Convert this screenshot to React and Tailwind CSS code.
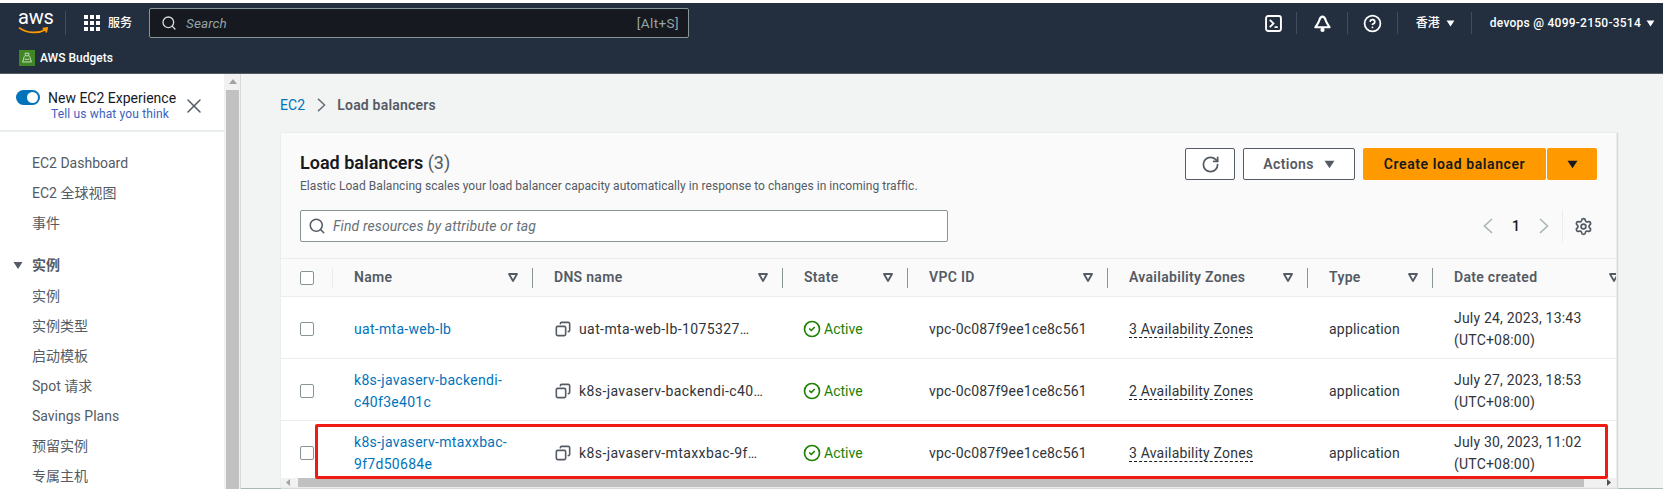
import React from "react";
import { Search, X, RotateCw, Settings, Copy, CircleCheck, CircleHelp } from "lucide-react";

const Caret = ({ className }) => (
  <svg viewBox="0 0 10 8" className={className}><path d="M0.5 0.5h9L5 7.5z" fill="currentColor" /></svg>
);
const Chevron = ({ className, left }) => (
  <svg viewBox="0 0 10 16" className={className}><path d={left ? "M9 1L1.5 8 9 15" : "M1 1l7.5 7L1 15"} fill="none" stroke="currentColor" strokeWidth="1.7" /></svg>
);
const FilterIcon = () => (
  <svg viewBox="0 0 10 9" className="w-[10px] h-[9px] text-[#545b64] shrink-0"><path d="M1 1h8L5 8z" fill="none" stroke="currentColor" strokeWidth="1.8" strokeLinejoin="round" /></svg>
);
const Checkbox = () => <div className="w-[14px] h-[14px] rounded-[2px] border border-[#879596] bg-white shrink-0" />;

const cols = "grid grid-cols-[52px_200px_250px_125px_200px_200px_125px_200px]";

const headers = ["Name", "DNS name", "State", "VPC ID", "Availability Zones", "Type", "Date created"];
const rows = [
  { name: ["uat-mta-web-lb"], dns: "uat-mta-web-lb-1075327…", az: "3 Availability Zones", d: "July 24, 2023, 13:43" },
  { name: ["k8s-javaserv-backendi-", "c40f3e401c"], dns: "k8s-javaserv-backendi-c40…", az: "2 Availability Zones", d: "July 27, 2023, 18:53" },
  { name: ["k8s-javaserv-mtaxxbac-", "9f7d50684e"], dns: "k8s-javaserv-mtaxxbac-9f…", az: "3 Availability Zones", d: "July 30, 2023, 11:02" },
];
const navItems = ["EC2 Dashboard", "EC2 全球视图", "事件"];
const navItems2 = ["实例", "实例类型", "启动模板", "Spot 请求", "Savings Plans", "预留实例", "专属主机"];

function TopNav() {
  return (
    <header className="h-[71px] shrink-0 bg-[#232f3e] border-b border-[#545b64] text-white flex flex-col">
      <div className="h-[40px] flex items-center">
        <div className="w-[66px] h-[24px] shrink-0 pl-[18px] border-r border-[#414d5c]">
          <div className="text-[20px] leading-[15px] tracking-[-0.2px] -mt-[1px]">aws</div>
          <svg viewBox="0 0 32 9" className="w-[31px] h-[9px] mt-[1px] text-[#ff9900]"><path d="M1 1.5C9 7.5 21 8 29 3.5M25.5 2.5l4.5-.5-1 4.5" fill="none" stroke="currentColor" strokeWidth="1.8" /></svg>
        </div>
        <div className="ml-[18px] grid grid-cols-3 gap-[2px] w-[16px] shrink-0">
          {Array.from({ length: 9 }).map((_, i) => <div key={i} className="w-[4px] h-[4px] bg-white" />)}
        </div>
        <div className="ml-[8px] w-[41px] text-[12px] shrink-0 font-medium">服务</div>
        <div className="w-[540px] h-[30px] bg-[#16191f] border border-[#879596] rounded-[2px] flex items-center pl-[11px] pr-[9px] shrink-0">
          <Search className="w-[16px] h-[16px] text-[#d5dbdb]" strokeWidth={2} />
          <span className="ml-[9px] text-[13.5px] italic tracking-[0.1px] text-[#95a5a6]">Search</span>
          <span className="ml-auto text-[13.5px] tracking-[0.4px] text-[#95a5a6]">[Alt+S]</span>
        </div>
        <div className="flex items-center ml-auto h-[24px] pr-[8px]">
          <svg viewBox="0 0 16 16" className="w-[17px] h-[17px] mr-[14px]"><rect x="1" y="1" width="14" height="14" rx="2" fill="none" stroke="white" strokeWidth="1.8" /><path d="M4.5 4.5L8 8l-3.5 3.5M9 11.5h3" fill="none" stroke="white" strokeWidth="1.7" /></svg>
          <div className="w-px h-[22px] bg-[#414d5c]" />
          <svg viewBox="0 0 16 16" className="w-[17px] h-[17px] ml-[17px] mr-[16px]"><path d="M8 1.5C6.2 1.5 5.5 3 5 5c-.6 2.4-2.5 4.5-3.7 6.5h13.4C13.5 9.5 11.6 7.4 11 5c-.5-2-1.2-3.5-3-3.5z" fill="none" stroke="white" strokeWidth="2" strokeLinejoin="round" /><circle cx="8" cy="14" r="2" fill="white" /></svg>
          <div className="w-px h-[22px] bg-[#414d5c]" />
          <CircleHelp className="w-[19px] h-[19px] ml-[15px] mr-[15px] text-white" strokeWidth={2.2} />
          <div className="w-px h-[22px] bg-[#414d5c]" />
          <span className="ml-[18px] text-[12px] font-medium">香港</span>
          <Caret className="w-[9px] h-[7px] ml-[6px] mr-[16px]" />
          <div className="w-px h-[22px] bg-[#414d5c]" />
          <span className="ml-[18px] text-[12px] font-medium tracking-[0.25px] whitespace-nowrap">devops @ 4099-2150-3514</span>
          <Caret className="w-[9px] h-[7px] ml-[5px]" />
        </div>
      </div>
      <div className="flex items-center h-[30px] pl-[19px]">
        <div className="w-[16px] h-[16px] bg-[#3f8624] flex items-center justify-center">
          <svg viewBox="0 0 16 16" className="w-[14px] h-[14px]"><path d="M6 2.5h4v3H6zM5 6l-2 6.5h10L11 6M5.5 9.5h5" fill="none" stroke="#d9ead0" strokeWidth="1" /></svg>
        </div>
        <span className="ml-[5px] text-[12px] font-medium">AWS Budgets</span>
      </div>
    </header>
  );
}

function Sidebar() {
  return (
    <aside className="w-[240px] shrink-0 flex bg-white border-r border-[#d5dbdb] box-content h-full overflow-hidden">
      <div className="w-[224px] shrink-0">
        <div className="h-[58px] border-b-2 border-[#eaeded] flex pt-[16px] pl-[16px]">
          <div className="w-[24px] h-[15px] rounded-full bg-[#0073bb] relative shrink-0">
            <div className="absolute right-[2px] top-[2px] w-[11px] h-[11px] rounded-full bg-white" />
          </div>
          <div className="ml-[8px] w-[132px] shrink-0">
            <div className="text-[14px] leading-[16px] text-[#16191f] whitespace-nowrap">New EC2 Experience</div>
            <div className="text-[12px] leading-[16px] pl-[3px] tracking-[0.15px] text-[#3b5fc0] whitespace-nowrap">Tell us what you think</div>
          </div>
          <X className="w-[24px] h-[24px] ml-[2px] mt-[4px] text-[#545b64]" strokeWidth={1.5} />
        </div>
        <nav className="pl-[32px] pt-[16px] text-[14px] text-[#545b64]">
          {navItems.map((t) => <div key={t} className="h-[30px] flex items-center">{t}</div>)}
          <div className="h-[30px] mt-[12px] flex items-center font-semibold relative">
            <Caret className="absolute -left-[19px] top-[11px] w-[10px] h-[9px]" />
            实例
          </div>
          <div className="mt-[1px]">
            {navItems2.map((t) => <div key={t} className="h-[30px] flex items-center">{t}</div>)}
          </div>
        </nav>
      </div>
      <div className="w-[16px] shrink-0 bg-[#f1f1f1] pt-[5px] pl-px flex flex-col items-center">
        <svg viewBox="0 0 8 5" className="w-[8px] h-[5px] text-[#a3a3a3]"><path d="M0 5L4 0l4 5z" fill="currentColor" /></svg>
        <div className="mt-[6px] w-[13px] flex-1 bg-[#c1c1c1]" />
      </div>
    </aside>
  );
}

function Card() {
  return (
    <section className="flex-1 min-w-0 border border-[#eaeded] shadow-[1px_1px_1px_#d5dbdb] bg-white relative h-[353px] flex flex-col overflow-hidden">
      <div className="bg-[#fafafa] h-[126px] shrink-0 px-[19px] pt-[15px] border-b border-[#eaeded]">
        <div className="flex justify-between">
          <div>
            <h1 className="text-[18px] leading-[30px] font-semibold text-[#16191f]">Load balancers <span className="font-normal text-[#545b64]">(3)</span></h1>
            <p className="text-[12px] leading-[16px] tracking-[0.05px] text-[#545b64] whitespace-nowrap">Elastic Load Balancing scales your load balancer capacity automatically in response to changes in incoming traffic.</p>
          </div>
          <div className="flex h-[32px] shrink-0">
            <button className="w-[50px] border border-[#545b64] rounded-[2px] bg-white flex items-center justify-center"><RotateCw className="w-[19px] h-[19px] text-[#545b64]" strokeWidth={2.2} /></button>
            <button className="ml-[8px] w-[112px] border border-[#545b64] rounded-[2px] bg-white flex items-center justify-center text-[14px] font-semibold tracking-[0.35px] text-[#545b64]">Actions<Caret className="w-[11px] h-[9px] ml-[10px]" /></button>
            <button className="ml-[8px] w-[183px] rounded-[2px] bg-[#ff9900] text-[14px] font-semibold tracking-[0.6px] text-[#16191f]">Create load balancer</button>
            <button className="ml-px w-[50px] rounded-[2px] bg-[#ff9900] flex items-center justify-center"><Caret className="w-[11px] h-[9px] text-[#16191f]" /></button>
          </div>
        </div>
        <div className="flex items-center mt-[16px] h-[32px]">
          <div className="w-[648px] h-[32px] bg-white border border-[#879596] rounded-[2px] flex items-center pl-[7px]">
            <Search className="w-[18px] h-[18px] text-[#545b64]" strokeWidth={2} />
            <span className="ml-[7px] text-[14px] italic tracking-[0.1px] text-[#687078]">Find resources by attribute or tag</span>
          </div>
          <div className="ml-auto flex items-center h-[32px] pr-[4px]">
            <Chevron left className="w-[10px] h-[16px] text-[#aab7b8]" />
            <span className="w-[46px] text-center text-[14px] font-medium text-[#16191f]">1</span>
            <Chevron className="w-[10px] h-[16px] text-[#aab7b8]" />
            <div className="ml-[13px] w-px h-[32px] bg-[#eaeded]" />
            <Settings className="ml-[11px] w-[19px] h-[19px] text-[#545b64]" strokeWidth={2.2} />
          </div>
        </div>
      </div>
      <div className="flex-1 min-h-0 overflow-hidden">
        <div className={`${cols} h-[38px] bg-[#fafafa] border-b border-[#eaeded]`}>
          <div className="flex items-center pl-[19px]"><Checkbox /><div className="ml-auto w-px h-[20px] bg-[#eaeded]" /></div>
          {headers.map((h, i) => (
            <div key={h} className="flex items-center pl-[21px] text-[14px] font-semibold tracking-[0.3px] text-[#545b64] whitespace-nowrap">
              {h}
              <div className="ml-auto mr-[14px]"><FilterIcon /></div>
              {i < 6 && <div className="w-px h-[20px] bg-[#879596]" />}
            </div>
          ))}
        </div>
        {rows.map((r) => (
          <div key={r.dns} className={`${cols} h-[62px] pt-[2px] border-b border-[#eaeded] text-[14px] leading-[22px] tracking-[0.2px] text-[#2f343b] items-center`}>
            <div className="pl-[19px]"><Checkbox /></div>
            <div className="pl-[21px] tracking-[0.3px] text-[#0073bb]">{r.name.map((n) => <div key={n}>{n}</div>)}</div>
            <div className="pl-[22px] flex items-center whitespace-nowrap"><Copy className="w-[16px] h-[16px] text-[#545b64] -scale-x-100 shrink-0" strokeWidth={2.4} /><span className="ml-[8px] tracking-[0.4px]">{r.dns}</span></div>
            <div className="pl-[20px] flex items-center tracking-normal text-[#1d8102]"><CircleCheck className="w-[18px] h-[18px]" strokeWidth={2.2} /><span className="ml-[3px]">Active</span></div>
            <div className="pl-[21px]">vpc-0c087f9ee1ce8c561</div>
            <div className="pl-[21px]"><span className="border-b border-dashed border-[#16191f]">{r.az}</span></div>
            <div className="pl-[21px]">application</div>
            <div className="pl-[21px] whitespace-nowrap"><div>{r.d}</div><div>(UTC+08:00)</div></div>
          </div>
        ))}
      </div>
      <div className="absolute left-0 right-0 bottom-0 h-[9px] bg-[#f1f1f1] flex items-center">
        <svg viewBox="0 0 4 7" className="ml-[5px] w-[4px] h-[7px] text-[#a3a3a3]"><path d="M4 0L0 3.5 4 7z" fill="currentColor" /></svg>
        <div className="ml-[8px] w-[1286px] h-[9px] bg-[#c1c1c1]" />
        <svg viewBox="0 0 4 7" className="ml-auto mr-[5px] w-[4px] h-[7px] text-[#505050]"><path d="M0 0l4 3.5L0 7z" fill="currentColor" /></svg>
      </div>
      <div className="absolute left-[34px] top-[291px] w-[1293px] h-[55px] border-[3px] border-[#f01c14] rounded-[2px] pointer-events-none" />
    </section>
  );
}

export default function App() {
  return (
    <div className="w-[1663px] h-[489px] overflow-hidden bg-white flex flex-col pt-[3px] font-['Roboto','Noto_Sans_CJK_SC',sans-serif]">
      <TopNav />
      <div className="flex flex-1 min-h-0">
        <Sidebar />
        <main className="flex-1 min-w-0 bg-[#f2f3f3] pl-[39px] pr-[46px] flex flex-col border-b border-[#aab7b8]">
          <div className="h-[58px] shrink-0 flex items-center text-[14px] pt-[4px]">
            <span className="text-[#0073bb] tracking-[0.1px]">EC2</span>
            <Chevron className="w-[9px] h-[14px] ml-[12px] mr-[11px] text-[#687078]" />
            <span className="font-semibold tracking-[0.2px] text-[#545b64]">Load balancers</span>
          </div>
          <Card />
        </main>
      </div>
    </div>
  );
}
